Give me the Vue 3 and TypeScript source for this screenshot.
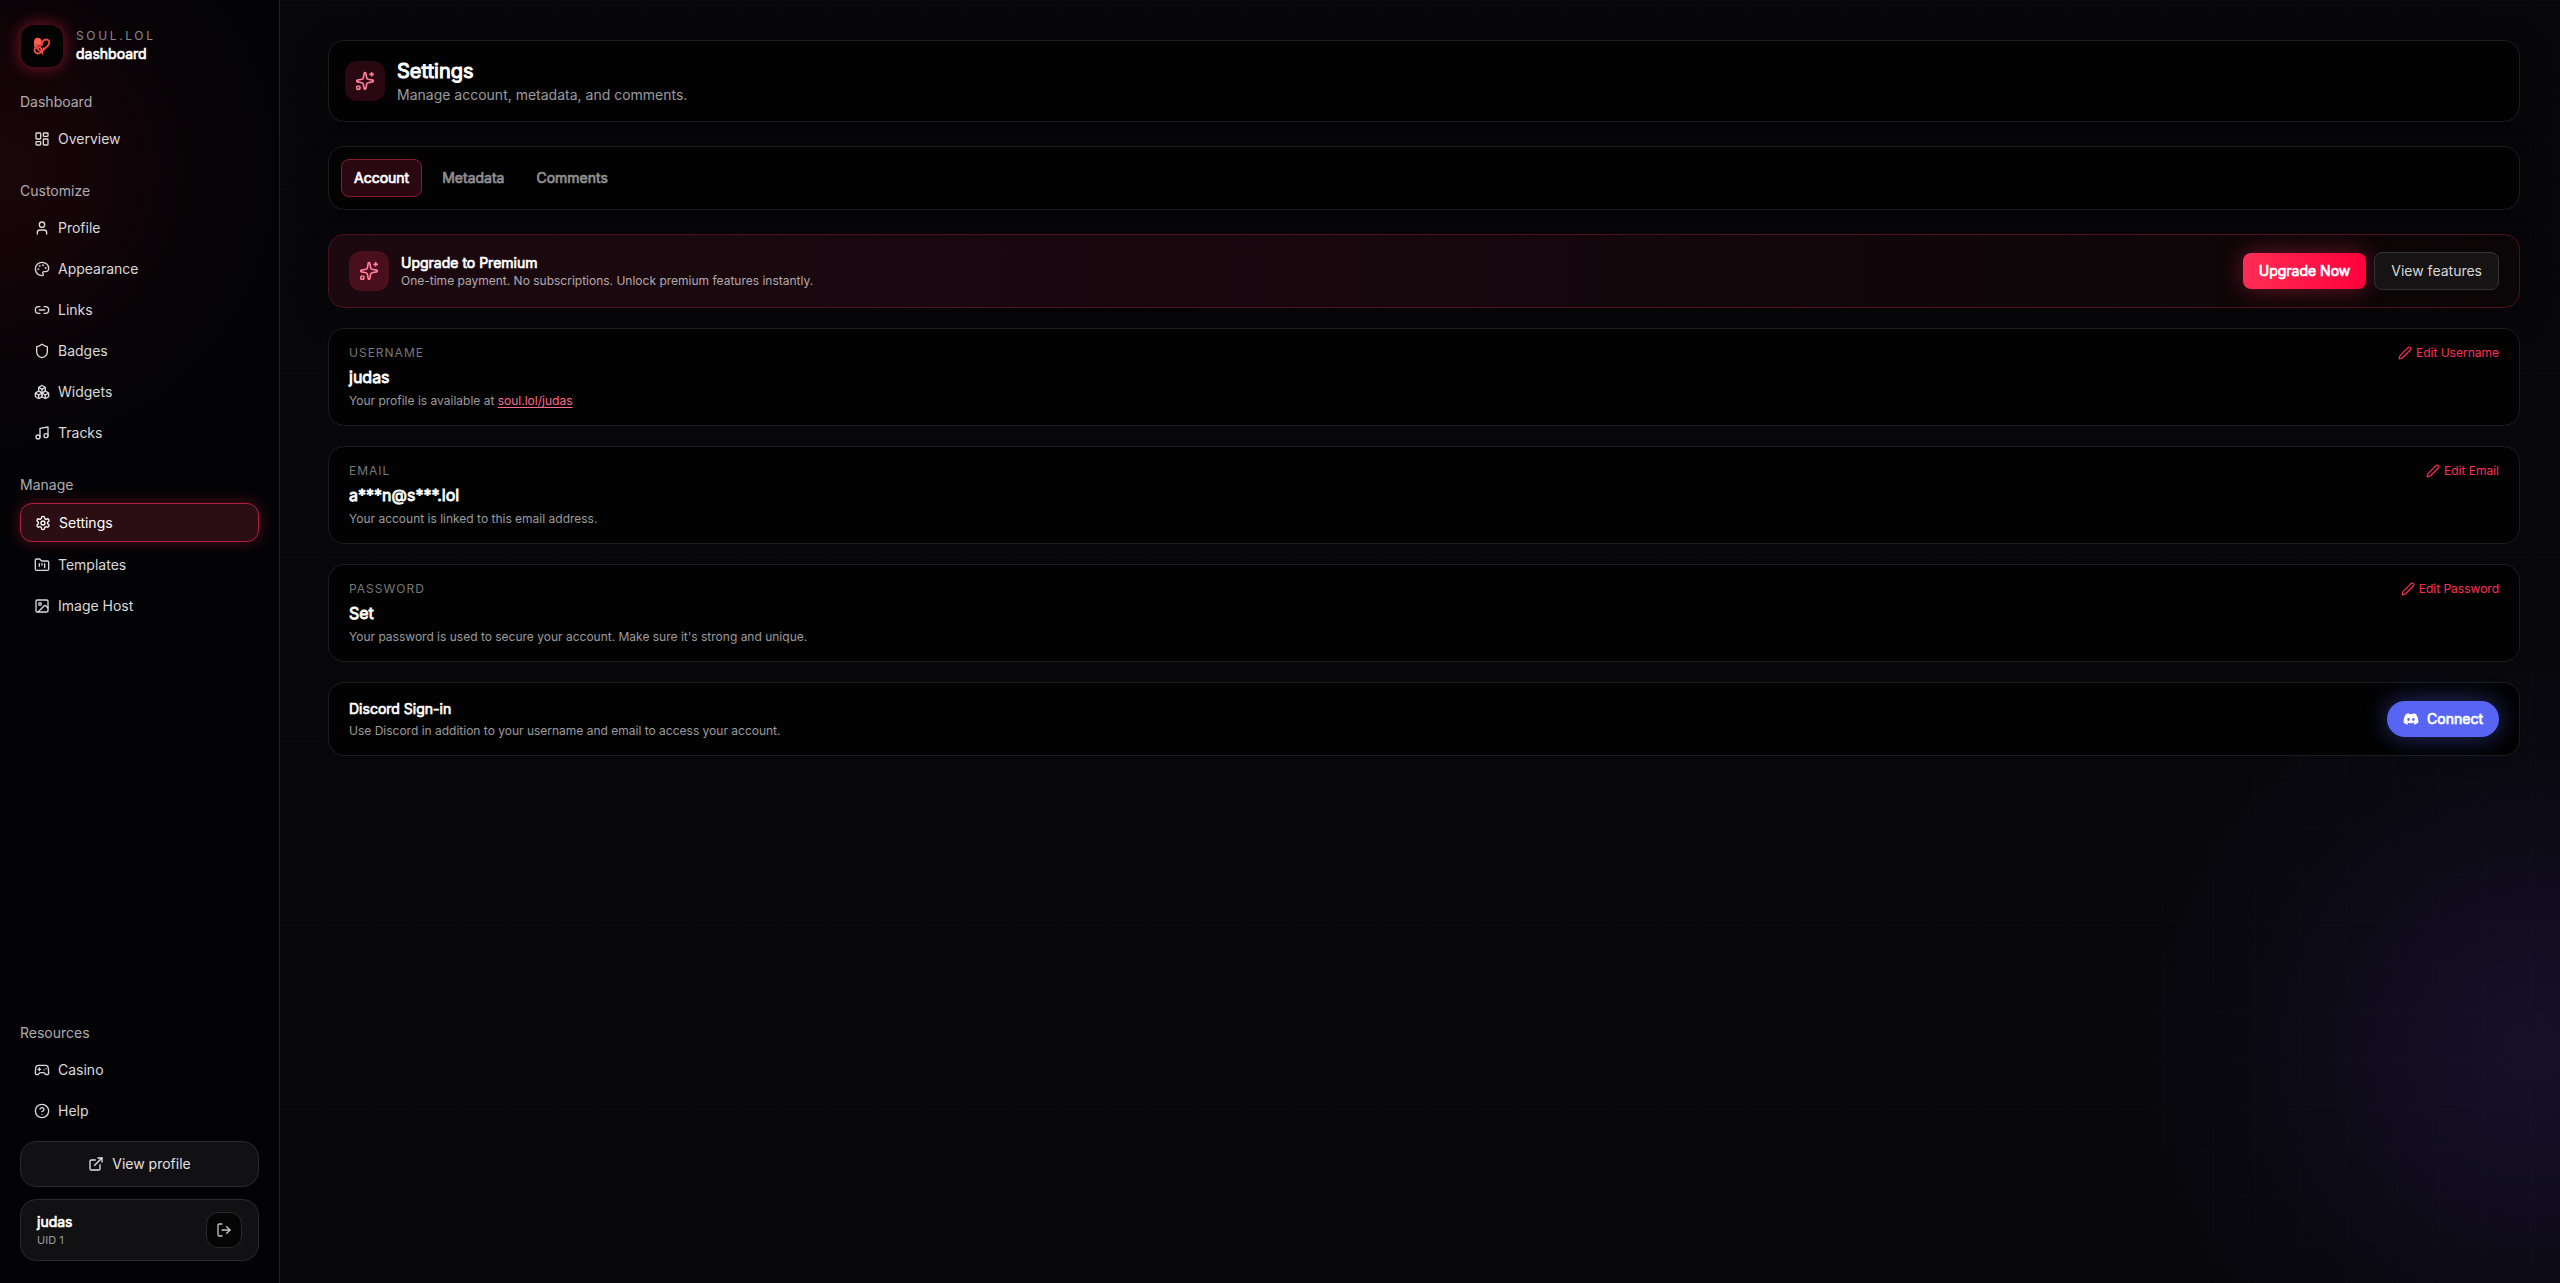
<script setup lang="ts">
import { h, type FunctionalComponent } from 'vue'

interface Shape {
  d?: string[]
  circles?: number[][]
  rects?: number[][]
}
interface NavItem {
  label: string
  icon: string
  active?: boolean
}
interface NavGroup {
  title: string
  items: NavItem[]
}

const icons: Record<string, Shape> = {
  overview: { rects: [[3, 3, 7, 9], [14, 3, 7, 5], [14, 12, 7, 9], [3, 16, 7, 5]] },
  profile: { d: ['M19 21v-2a4 4 0 0 0-4-4H9a4 4 0 0 0-4 4v2'], circles: [[12, 7, 4]] },
  appearance: {
    d: ['M12 22a1 1 0 0 1 0-20 10 9 0 0 1 10 9 5 5 0 0 1-5 5h-2.25a1.75 1.75 0 0 0-1.4 2.8l.3.4a1.75 1.75 0 0 1-1.4 2.8z'],
    circles: [[13.5, 6.5, 0.5], [17.5, 10.5, 0.5], [6.5, 12.5, 0.5], [8.5, 7.5, 0.5]],
  },
  links: { d: ['M9 17H7A5 5 0 0 1 7 7h2', 'M15 7h2a5 5 0 1 1 0 10h-2', 'M8 12h8'] },
  badges: {
    d: ['M20 13c0 5-3.5 7.5-7.66 8.95a1 1 0 0 1-.67-.01C7.5 20.5 4 18 4 13V6a1 1 0 0 1 1-1c2 0 4.5-1.2 6.24-2.72a1.17 1.17 0 0 1 1.52 0C14.51 3.81 17 5 19 5a1 1 0 0 1 1 1z'],
  },
  widgets: {
    d: [
      'M2.97 12.92A2 2 0 0 0 2 14.63v3.24a2 2 0 0 0 .97 1.71l3 1.8a2 2 0 0 0 2.06 0L12 19v-5.5l-5-3-4.03 2.42Z',
      'm7 16.5-4.74-2.85', 'm7 16.5 5-3', 'M7 16.5v5.17',
      'M12 13.5V19l3.97 2.38a2 2 0 0 0 2.06 0l3-1.8a2 2 0 0 0 .97-1.71v-3.24a2 2 0 0 0-.97-1.71L17 10.5l-5 3Z',
      'm17 16.5-5-3', 'm17 16.5 4.74-2.85', 'M17 16.5v5.17',
      'M7.97 4.42A2 2 0 0 0 7 6.13v4.37l5 3 5-3V6.13a2 2 0 0 0-.97-1.71l-3-1.8a2 2 0 0 0-2.06 0l-3 1.8Z',
      'M12 8 7.26 5.15', 'm12 8 4.74-2.85', 'M12 13.5V8',
    ],
  },
  tracks: { d: ['M9 18V5l12-2v13'], circles: [[6, 18, 3], [18, 16, 3]] },
  settings: {
    d: ['M12.22 2h-.44a2 2 0 0 0-2 2v.18a2 2 0 0 1-1 1.73l-.43.25a2 2 0 0 1-2 0l-.15-.08a2 2 0 0 0-2.73.73l-.22.38a2 2 0 0 0 .73 2.73l.15.1a2 2 0 0 1 1 1.72v.51a2 2 0 0 1-1 1.74l-.15.09a2 2 0 0 0-.73 2.73l.22.38a2 2 0 0 0 2.73.73l.15-.08a2 2 0 0 1 2 0l.43.25a2 2 0 0 1 1 1.73V20a2 2 0 0 0 2 2h.44a2 2 0 0 0 2-2v-.18a2 2 0 0 1 1-1.73l.43-.25a2 2 0 0 1 2 0l.15.08a2 2 0 0 0 2.73-.73l.22-.39a2 2 0 0 0-.73-2.73l-.15-.08a2 2 0 0 1-1-1.74v-.5a2 2 0 0 1 1-1.74l.15-.09a2 2 0 0 0 .73-2.73l-.22-.38a2 2 0 0 0-2.73-.73l-.15.08a2 2 0 0 1-2 0l-.43-.25a2 2 0 0 1-1-1.73V4a2 2 0 0 0-2-2z'],
    circles: [[12, 12, 3]],
  },
  templates: {
    d: ['M4 20h16a2 2 0 0 0 2-2V8a2 2 0 0 0-2-2h-7.93a2 2 0 0 1-1.66-.9l-.82-1.2A2 2 0 0 0 7.93 3H4a2 2 0 0 0-2 2v13c0 1.1.9 2 2 2Z', 'M8 10v4', 'M12 10v2', 'M16 10v6'],
  },
  image: { rects: [[3, 3, 18, 18, 2]], circles: [[9, 9, 2]], d: ['m21 15-3.086-3.086a2 2 0 0 0-2.828 0L6 21'] },
  casino: {
    d: ['M6 11h4', 'M8 9v4', 'M15 12h.01', 'M18 10h.01', 'M17.32 5H6.68a4 4 0 0 0-3.978 3.59c-.006.052-.01.101-.017.152C2.604 9.416 2 14.456 2 16a3 3 0 0 0 3 3c1 0 1.5-.5 2-1l1.414-1.414A2 2 0 0 1 9.828 16h4.344a2 2 0 0 1 1.414.586L17 18c.5.5 1 1 2 1a3 3 0 0 0 3-3c0-1.545-.604-6.584-.685-7.258-.007-.05-.011-.1-.017-.151A4 4 0 0 0 17.32 5z'],
  },
  help: { circles: [[12, 12, 10]], d: ['M9.09 9a3 3 0 0 1 5.83 1c0 2-3 3-3 3', 'M12 17h.01'] },
  external: { d: ['M15 3h6v6', 'M10 14 21 3', 'M18 13v6a2 2 0 0 1-2 2H5a2 2 0 0 1-2-2V8a2 2 0 0 1 2-2h6'] },
  logout: { d: ['m16 17 5-5-5-5', 'M21 12H9', 'M9 21H5a2 2 0 0 1-2-2V5a2 2 0 0 1 2-2h4'] },
  pen: { d: ['M21.174 6.812a1 1 0 0 0-3.986-3.987L3.842 16.174a2 2 0 0 0-.5.83l-1.321 4.352a.5.5 0 0 0 .623.622l4.353-1.32a2 2 0 0 0 .83-.497z'] },
  sparkles: {
    d: ['M11.017 2.814a1 1 0 0 1 1.966 0l1.051 5.558a2 2 0 0 0 1.594 1.594l5.558 1.051a1 1 0 0 1 0 1.966l-5.558 1.051a2 2 0 0 0-1.594 1.594l-1.051 5.558a1 1 0 0 1-1.966 0l-1.051-5.558a2 2 0 0 0-1.594-1.594l-5.558-1.051a1 1 0 0 1 0-1.966l5.558-1.051a2 2 0 0 0 1.594-1.594z', 'M20 2v4', 'M22 4h-4'],
    circles: [[4, 20, 2]],
  },
}

// Every line icon shares one svg wrapper.
const Icon: FunctionalComponent<{ name: string; size?: number }> = (props) => {
  const s = icons[props.name]
  const size = props.size ?? 16
  return h(
    'svg',
    {
      width: size, height: size, viewBox: '0 0 24 24', fill: 'none', stroke: 'currentColor',
      'stroke-width': 2, 'stroke-linecap': 'round', 'stroke-linejoin': 'round', 'aria-hidden': 'true',
    },
    [
      ...(s.rects ?? []).map(([x, y, width, height, rx]) => h('rect', { x, y, width, height, rx: rx ?? 1 })),
      ...(s.circles ?? []).map(([cx, cy, r]) => h('circle', { cx, cy, r })),
      ...(s.d ?? []).map((d) => h('path', { d })),
    ],
  )
}
Icon.props = ['name', 'size']

const groups: NavGroup[] = [
  { title: 'Dashboard', items: [{ label: 'Overview', icon: 'overview' }] },
  {
    title: 'Customize',
    items: [
      { label: 'Profile', icon: 'profile' },
      { label: 'Appearance', icon: 'appearance' },
      { label: 'Links', icon: 'links' },
      { label: 'Badges', icon: 'badges' },
      { label: 'Widgets', icon: 'widgets' },
      { label: 'Tracks', icon: 'tracks' },
    ],
  },
  {
    title: 'Manage',
    items: [
      { label: 'Settings', icon: 'settings', active: true },
      { label: 'Templates', icon: 'templates' },
      { label: 'Image Host', icon: 'image' },
    ],
  },
  {
    title: 'Resources',
    items: [
      { label: 'Casino', icon: 'casino' },
      { label: 'Help', icon: 'help' },
    ],
  },
]

const tabs = ['Account', 'Metadata', 'Comments']

const fields = [
  { label: 'Username', value: 'judas', note: 'Your profile is available at ', link: 'soul.lol/judas' },
  { label: 'Email', value: 'a***n@s***.lol', note: 'Your account is linked to this email address.' },
  { label: 'Password', value: 'Set', note: "Your password is used to secure your account. Make sure it's strong and unique." },
]
</script>

<template>
  <div class="shell">
    <aside class="sidebar">
      <div class="brand">
        <span class="brand-mark">
          <svg width="20" height="20" viewBox="0 0 20 20" fill="none" aria-hidden="true">
            <path d="M2 5.500C2 3 4 1.500 6.200 1.800 8.500 2 9.500 3.500 9.700 5.500L10.500 9 7 12 2.200 10.500Z" fill="#ff5f52" />
            <path d="M9.800 7.500C10.500 4.500 13 3 15.300 3.700 18 4.600 17.800 8 15.500 10L10.800 14.500" stroke="#f5473e" stroke-width="1.800" stroke-linecap="round" />
            <circle cx="6" cy="14" r="3.500" stroke="#f8544a" stroke-width="1.800" />
            <path d="M10.500 8.500C7 8.500 6 11 6.500 13.500c1.500 3 5 1.500 5-1.500M3.500 11.500l6 5M10.500 14v4" stroke="#f04a42" stroke-width="1.400" stroke-linecap="round" />
            <path d="M4 8.500 8 10M5 11.500C6 10 7 9.500 8.500 9.500" stroke="#8a1f1c" stroke-width="0.700" stroke-linecap="round" />
          </svg>
        </span>
        <span class="brand-text">
          <span class="brand-name">SOUL.LOL</span>
          <span class="strong">dashboard</span>
        </span>
      </div>

      <nav class="nav" aria-label="Main">
        <section v-for="g in groups" :key="g.title" class="group">
          <h2 class="group-title">{{ g.title }}</h2>
          <a
            v-for="item in g.items"
            :key="item.label"
            href="#"
            class="nav-item"
            :class="{ active: item.active }"
          >
            <Icon :name="item.icon" />
            <span>{{ item.label }}</span>
          </a>
        </section>
      </nav>

      <a href="#" class="view-profile"><Icon name="external" /><span>View profile</span></a>

      <div class="user">
        <div class="user-info">
          <span class="strong">judas</span>
          <span class="user-id">UID 1</span>
        </div>
        <button class="logout" type="button" aria-label="Log out"><Icon name="logout" /></button>
      </div>
    </aside>

    <main class="main">
      <header class="card raised head">
        <span class="tile"><Icon name="sparkles" :size="20" /></span>
        <div>
          <h1 class="title strong">Settings</h1>
          <p class="subtitle">Manage account, metadata, and comments.</p>
        </div>
      </header>

      <div class="card raised tabs">
        <button
          v-for="(t, i) in tabs"
          :key="t"
          type="button"
          class="tab strong"
          :class="{ current: i === 0 }"
        >{{ t }}</button>
      </div>

      <div class="stack">
        <section class="card raised row premium">
          <span class="tile vivid"><Icon name="sparkles" :size="20" /></span>
          <div class="grow">
            <h2 class="strong">Upgrade to Premium</h2>
            <p class="note light">One-time payment. No subscriptions. Unlock premium features instantly.</p>
          </div>
          <div class="actions">
            <button type="button" class="btn upgrade strong">Upgrade Now</button>
            <button type="button" class="btn outline">View features</button>
          </div>
        </section>

        <section v-for="f in fields" :key="f.label" class="card row field">
          <div class="grow lines">
            <h2 class="field-label">{{ f.label }}</h2>
            <p class="field-value strong">{{ f.value }}</p>
            <p class="note">{{ f.note }}<a v-if="f.link" href="#" class="link">{{ f.link }}</a></p>
          </div>
          <button type="button" class="edit"><Icon name="pen" :size="14" />Edit {{ f.label }}</button>
        </section>

        <section class="card row">
          <div class="grow lines">
            <h2 class="strong">Discord Sign-in</h2>
            <p class="note">Use Discord in addition to your username and email to access your account.</p>
          </div>
          <button type="button" class="btn discord strong">
            <svg width="16" height="16" viewBox="-1 -1 26 26" fill="currentColor" aria-hidden="true">
              <path d="M20.317 4.370a19.791 19.791 0 0 0-4.885-1.515.074.074 0 0 0-.079.037c-.211.375-.445.865-.608 1.250a18.270 18.270 0 0 0-5.487 0 12.640 12.640 0 0 0-.617-1.250.077.077 0 0 0-.079-.037A19.736 19.736 0 0 0 3.677 4.370a.070.070 0 0 0-.032.027C.533 9.046-.320 13.580.099 18.058a.082.082 0 0 0 .031.056 19.900 19.900 0 0 0 5.993 3.030.078.078 0 0 0 .084-.028c.462-.630.874-1.295 1.226-1.994a.076.076 0 0 0-.041-.106 13.107 13.107 0 0 1-1.872-.892.077.077 0 0 1-.008-.128c.126-.094.252-.192.372-.292a.074.074 0 0 1 .078-.010c3.928 1.793 8.180 1.793 12.061 0a.074.074 0 0 1 .079.009c.120.099.246.198.373.293a.077.077 0 0 1-.007.128 12.299 12.299 0 0 1-1.873.891.077.077 0 0 0-.041.107c.360.698.772 1.363 1.225 1.993a.076.076 0 0 0 .084.029 19.839 19.839 0 0 0 6.002-3.030.077.077 0 0 0 .032-.055c.500-5.177-.838-9.674-3.549-13.660a.061.061 0 0 0-.031-.029zM8.020 15.331c-1.182 0-2.157-1.086-2.157-2.419s.956-2.419 2.157-2.419c1.211 0 2.176 1.095 2.157 2.419 0 1.333-.956 2.419-2.157 2.419zm7.975 0c-1.183 0-2.157-1.086-2.157-2.419s.955-2.419 2.157-2.419c1.210 0 2.176 1.095 2.157 2.419 0 1.333-.946 2.419-2.157 2.419z" />
            </svg>
            Connect
          </button>
        </section>
      </div>
    </main>
  </div>
</template>

<style>
body {
  background: #07070a;
}
</style>

<style scoped>
.shell {
  display: flex;
  min-height: 100vh;
  font-family: Inter, "Liberation Sans", sans-serif;
  font-size: 14px;
  line-height: 20px;
  font-weight: 400;
  color: #fff;
  background:
    linear-gradient(to right, rgba(255, 255, 255, 0.01) 1px, transparent 1px) 0 0 / 46px 46px,
    linear-gradient(to bottom, rgba(255, 255, 255, 0.01) 1px, transparent 1px) 0 0 / 46px 46px,
    radial-gradient(circle at 99% 82%, rgba(80, 50, 160, 0.2), rgba(80, 50, 160, 0.14) 130px, rgba(80, 50, 160, 0.05) 270px, transparent 400px),
    #07070b;
}
h1,
h2,
p {
  margin: 0;
  font-size: inherit;
  font-weight: inherit;
}
a {
  color: inherit;
  text-decoration: none;
}
button {
  font: inherit;
  color: inherit;
  margin: 0;
  padding: 0;
  border: 0;
  background: none;
  cursor: pointer;
}
svg {
  display: block;
  flex: none;
}
/* Emphasis keeps the regular letterforms and thickens their outline. */
.strong {
  -webkit-text-stroke: 0.05em currentColor;
}

.sidebar {
  box-sizing: border-box;
  flex: none;
  width: 280px;
  min-height: 100vh;
  padding: 24px 20px 22px;
  display: flex;
  flex-direction: column;
  border-right: 1px solid #202023;
  background:
    radial-gradient(circle at 0 170px, #19060a, #120408 110px, #080306 190px, transparent 280px),
    #030305;
}
.brand {
  display: flex;
  align-items: center;
  gap: 12px;
}
.brand-mark {
  box-sizing: border-box;
  width: 44px;
  height: 44px;
  display: grid;
  place-items: center;
  border: 1px solid rgba(255, 45, 85, 0.25);
  border-radius: 14px;
  background: #030303;
  box-shadow: 0 0 16px rgba(255, 45, 85, 0.45);
}
.brand-text {
  display: flex;
  flex-direction: column;
}
.brand-name {
  font-size: 12px;
  line-height: 16px;
  letter-spacing: 0.22em;
  color: #8c8a8c;
}
.nav {
  flex: 1;
  margin-top: 24px;
  display: flex;
  flex-direction: column;
  gap: 24px;
}
.group {
  display: flex;
  flex-direction: column;
  gap: 4px;
}
.group:last-child {
  margin-top: auto;
}
.group-title {
  margin-bottom: 4px;
  color: #aeacae;
}
.nav-item {
  display: flex;
  align-items: center;
  gap: 8px;
  padding: 8px 14px;
  border-radius: 12px;
  line-height: 21px;
  color: #dad9da;
}
.nav-item.active {
  border: 1px solid #b01f3d;
  background: #2b0e14;
  color: #fff;
  box-shadow: 0 0 16px rgba(255, 45, 85, 0.3);
}
.view-profile {
  margin-top: 12px;
  height: 44px;
  display: flex;
  align-items: center;
  justify-content: center;
  gap: 8px;
  border: 1px solid #2a2a2c;
  border-radius: 16px;
  background: #111113;
  color: #e2e2e3;
}
.user {
  margin-top: 12px;
  padding: 12px 16px;
  display: flex;
  align-items: center;
  justify-content: space-between;
  border: 1px solid #2a2a2c;
  border-radius: 16px;
  background: #111113;
}
.user-info {
  display: flex;
  flex-direction: column;
}
.user-id {
  font-size: 11px;
  line-height: 16px;
  color: #9a9a9b;
}
.logout {
  box-sizing: border-box;
  width: 36px;
  height: 36px;
  display: grid;
  place-items: center;
  border: 1px solid #2a2a2c;
  border-radius: 12px;
  background: #050506;
  color: #c4c4c5;
}

.main {
  flex: 1;
  min-width: 0;
  padding: 40px 40px 40px 48px;
  display: flex;
  flex-direction: column;
  gap: 24px;
}
.stack {
  display: flex;
  flex-direction: column;
  gap: 20px;
}
.card {
  border: 1px solid #1d1d1f;
  border-radius: 16px;
  background: #020203;
}
.raised {
  box-shadow: 0 8px 32px rgba(0, 0, 0, 0.3);
}
.head {
  display: flex;
  align-items: center;
  gap: 12px;
  padding: 16px;
}
.tile {
  flex: none;
  width: 40px;
  height: 40px;
  display: grid;
  place-items: center;
  border-radius: 12px;
  background: #290811;
  color: #ff7d98;
}
.tile.vivid {
  background: #4a0f1c;
}
.title {
  font-size: 20px;
  line-height: 28px;
}
.subtitle {
  color: #9b9b9c;
}
.tabs {
  display: flex;
  align-items: center;
  gap: 8px;
  padding: 12px;
}
.tab {
  padding: 8px 12px;
  border-radius: 8px;
  color: #8f8f90;
}
.tab.current {
  border: 1px solid #8c1a31;
  background: #290811;
  color: #fff;
}
.row {
  display: flex;
  align-items: center;
  gap: 12px;
  padding: 16px 20px;
}
.premium {
  border-color: #4f0f1d;
  background: linear-gradient(90deg, #1c0910, #16070d 50%, #0a0506);
}
.grow {
  flex: 1;
  min-width: 0;
}
.lines {
  display: flex;
  flex-direction: column;
  gap: 4px;
}
.note {
  font-size: 12px;
  line-height: 16px;
  color: #9b9b9c;
}
.note.light {
  color: #b3aaad;
}
.actions {
  display: flex;
  align-items: center;
  gap: 8px;
}
.btn {
  padding: 8px 16px;
  border-radius: 8px;
}
.upgrade {
  background: linear-gradient(90deg, #ff2d55, #ff003c);
  box-shadow: 0 0 24px rgba(255, 45, 85, 0.4);
}
.outline {
  border: 1px solid #333235;
  background: #151314;
  color: #d8d7d8;
}
.discord {
  display: flex;
  align-items: center;
  gap: 8px;
  border-radius: 18px;
  background: #5865f2;
  box-shadow: 0 0 24px rgba(88, 101, 242, 0.45);
}
.field {
  align-items: flex-start;
}
.field-label {
  font-size: 12px;
  line-height: 16px;
  letter-spacing: 1px;
  text-transform: uppercase;
  color: #777778;
}
.field-value {
  font-size: 16px;
  line-height: 24px;
}
.link {
  color: #ff6b8a;
  text-decoration: underline;
  text-underline-offset: 2px;
}
.edit {
  display: flex;
  align-items: center;
  gap: 4px;
  font-size: 12px;
  line-height: 16px;
  color: #ff2d55;
}
</style>
